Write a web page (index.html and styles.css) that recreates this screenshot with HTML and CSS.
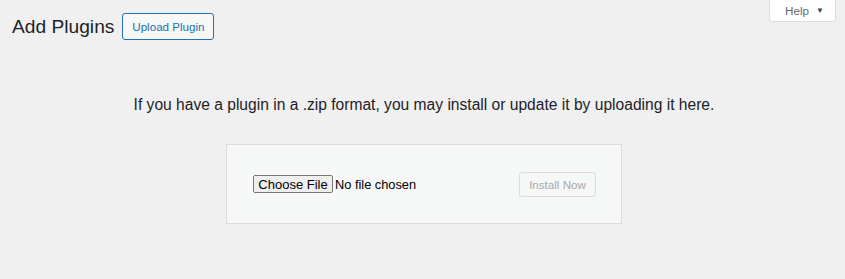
FILE: index.html
```html
<!DOCTYPE html>
<html lang="en">
<head>
<meta charset="utf-8">
<title>Add Plugins</title>
<link rel="stylesheet" href="styles.css">
</head>
<body>
<div class="help-tab">
  <button class="help-btn" type="button">Help <span class="caret">&#9660;</span></button>
</div>
<div class="wrap">
  <div class="title-row">
    <h1 class="title">Add Plugins</h1>
    <a class="title-action" href="#">Upload Plugin</a>
  </div>
  <p class="install-help">If you have a plugin in a .zip format, you may install or update it by uploading it here.</p>
  <form class="upload-form">
    <div class="file-field">
      <span class="file-btn">Choose File</span>
      <span class="file-name">No file chosen</span>
    </div>
    <button class="install-btn" type="button" disabled>Install Now</button>
  </form>
</div>
</body>
</html>
```
FILE: styles.css
```css
html, body {
  margin: 0;
  padding: 0;
  background: #f0f0f1;
  font-family: "Liberation Sans", Arial, sans-serif;
  color: #1d2327;
}
.help-tab {
  position: absolute;
  top: 0;
  right: 9px;
}
.help-btn {
  display: flex;
  align-items: center;
  gap: 7px;
  width: 67px;
  height: 22px;
  padding: 0 0 1px 15px;
  background: #fff;
  border: 1px solid #dcdcde;
  border-top: none;
  border-radius: 0 0 4px 4px;
  font-family: inherit;
  font-size: 11.7px;
  color: #646970;
  box-sizing: border-box;
}
.caret {
  font-size: 8px;
  color: #3c434a;
}
.wrap {
  padding: 13px 9px 0 12px;
}
.title-row {
  display: flex;
  align-items: center;
  gap: 8px;
}
.title {
  margin: 0;
  font-size: 19.2px;
  font-weight: 400;
  line-height: 26px;
}
.title-action {
  display: inline-flex;
  align-items: center;
  justify-content: center;
  width: 92px;
  height: 27px;
  box-sizing: border-box;
  border: 1px solid #2271b1;
  border-radius: 3px;
  background: #f6f7f7;
  color: #2271b1;
  font-size: 11.6px;
  text-decoration: none;
}
.install-help {
  margin: 55px 0 0;
  text-align: center;
  font-size: 15.6px;
  line-height: 20px;
  color: #1d2327;
}
.upload-form {
  display: flex;
  align-items: center;
  justify-content: space-between;
  width: 396px;
  height: 80px;
  box-sizing: border-box;
  margin: 29px auto 0;
  padding: 0 25px 0 26px;
  background: #f6f7f7;
  border: 1px solid #dcdcde;
}
.file-field {
  display: flex;
  align-items: center;
  gap: 2px;
}
.file-btn {
  display: inline-flex;
  align-items: center;
  justify-content: center;
  width: 80px;
  height: 18px;
  box-sizing: border-box;
  background: #efefef;
  border: 1px solid #767676;
  border-radius: 2px;
  font-size: 13px;
  color: #000;
}
.file-name {
  font-size: 12.8px;
  color: #000;
}
.install-btn {
  width: 77px;
  height: 25px;
  box-sizing: border-box;
  background: #f6f7f7;
  border: 1px solid #dcdcde;
  border-radius: 3px;
  font-family: inherit;
  font-size: 11.6px;
  color: #a7aaad;
  padding: 0;
}
```
